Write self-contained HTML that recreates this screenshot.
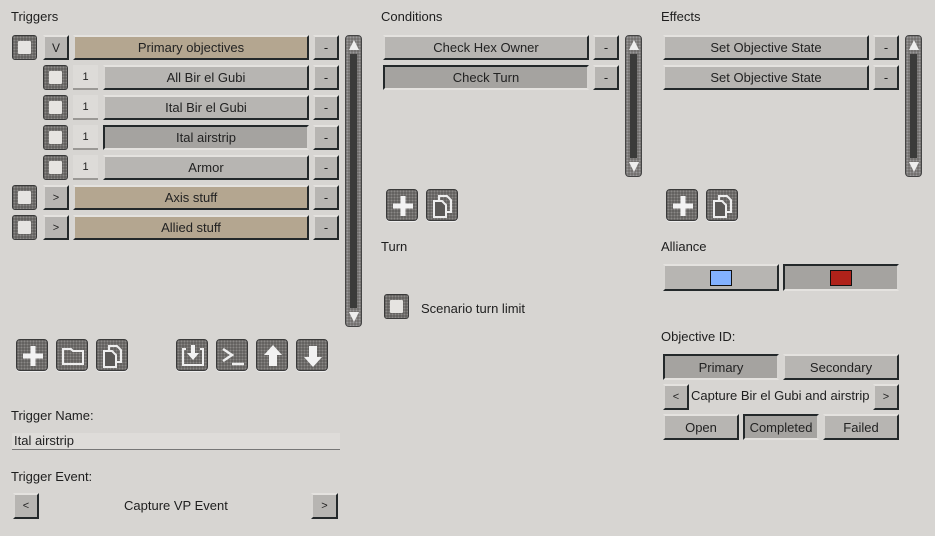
<!DOCTYPE html>
<html><head><style>
*{box-sizing:border-box;margin:0;padding:0}
body{width:935px;height:536px;overflow:hidden;background:#d7d5d2;font-family:"Liberation Sans",sans-serif;font-size:13px;color:#222;position:relative}
.a{position:absolute}
.lbl{position:absolute;font-size:13px;color:#1e1e1e}
.b{position:absolute;display:flex;align-items:center;justify-content:center;background:#b7b5b2;border-top:2px solid #e4e2df;border-left:2px solid #d8d6d3;border-bottom:2px solid #23282a;border-right:2px solid #23282a;color:#222;font-size:13px;white-space:nowrap}
.p{background:#a5a3a0;border-top:2px solid #23282a;border-left:2px solid #23282a;border-bottom:2px solid #e4e2df;border-right:2px solid #d8d6d3}
.t{background:#b4a690}
.s{font-size:11px}
.cb{position:absolute;width:25px;height:25px;border-radius:3px;background:#5a5856;background-image:radial-gradient(#8a8886 1px,transparent 1.3px);background-size:3px 3px;border:1px solid #3a3a3a}
.cb::after{content:"";position:absolute;left:5px;top:5px;width:13px;height:13px;background:#e6e4e1;border-radius:1px}
.num{position:absolute;width:25px;height:25px;background:#dddbd8;border-bottom:2px solid #9a9895;font-size:11px;display:flex;align-items:center;justify-content:center}
.sc{position:absolute;width:17px;border-radius:4px;background:#6a6866;background-image:radial-gradient(#999 1px,transparent 1.3px);background-size:3px 3px;border:1px solid #444}
.sc .tr{position:absolute;left:4px;right:4px;top:18px;bottom:18px;background:#3b3b3a}
.sc .u,.sc .d{position:absolute;left:3px;width:0;height:0;border-left:5px solid transparent;border-right:5px solid transparent}
.sc .u{top:4px;border-bottom:10px solid #eee}
.sc .d{bottom:4px;border-top:10px solid #eee}
.ic{position:absolute;width:32px;height:32px;border-radius:4px;background:#5a5856;background-image:radial-gradient(#8a8886 1px,transparent 1.3px);background-size:3px 3px;border:1px solid #3a3a3a;box-shadow:0 1px 0 #eee}
.ic svg{position:absolute;left:0;top:0}
</style></head><body>

<div class="lbl" style="left:11px;top:9px">Triggers</div>
<div class="cb" style="left:12px;top:35px"></div>
<div class="b" style="left:43px;top:35px;width:26px;height:25px;font-size:12px">V</div>
<div class="b t" style="left:73px;top:35px;width:236px;height:25px">Primary objectives</div>
<div class="b" style="left:313px;top:35px;width:26px;height:25px">-</div>

<div class="cb" style="left:43px;top:65px"></div><div class="num" style="left:73px;top:65px">1</div>
<div class="b" style="left:103px;top:65px;width:206px;height:25px">All Bir el Gubi</div>
<div class="b" style="left:313px;top:65px;width:26px;height:25px">-</div>

<div class="cb" style="left:43px;top:95px"></div><div class="num" style="left:73px;top:95px">1</div>
<div class="b" style="left:103px;top:95px;width:206px;height:25px">Ital Bir el Gubi</div>
<div class="b" style="left:313px;top:95px;width:26px;height:25px">-</div>

<div class="cb" style="left:43px;top:125px"></div><div class="num" style="left:73px;top:125px">1</div>
<div class="b p" style="left:103px;top:125px;width:206px;height:25px">Ital airstrip</div>
<div class="b" style="left:313px;top:125px;width:26px;height:25px">-</div>

<div class="cb" style="left:43px;top:155px"></div><div class="num" style="left:73px;top:155px">1</div>
<div class="b" style="left:103px;top:155px;width:206px;height:25px">Armor</div>
<div class="b" style="left:313px;top:155px;width:26px;height:25px">-</div>

<div class="cb" style="left:12px;top:185px"></div>
<div class="b s" style="left:43px;top:185px;width:26px;height:25px">&gt;</div>
<div class="b t" style="left:73px;top:185px;width:236px;height:25px">Axis stuff</div>
<div class="b" style="left:313px;top:185px;width:26px;height:25px">-</div>

<div class="cb" style="left:12px;top:215px"></div>
<div class="b s" style="left:43px;top:215px;width:26px;height:25px">&gt;</div>
<div class="b t" style="left:73px;top:215px;width:236px;height:25px">Allied stuff</div>
<div class="b" style="left:313px;top:215px;width:26px;height:25px">-</div>

<div class="sc" style="left:345px;top:35px;height:292px"><div class="tr"></div><div class="u"></div><div class="d"></div></div>

<div class="ic" style="left:16px;top:339px"><svg width="32" height="32"><path d="M16 6v20M6 16h20" stroke="#f2f2f2" stroke-width="5"/></svg></div>
<div class="ic" style="left:56px;top:339px"><svg width="32" height="32"><path d="M6 9h8l2 2h10v13H6z" fill="none" stroke="#eee" stroke-width="2"/></svg></div>
<div class="ic" style="left:96px;top:339px"><svg width="32" height="32"><path d="M12 6h8l4 4v12h-12z" fill="none" stroke="#eee" stroke-width="2"/><path d="M7 11h8l4 4v12H7z" fill="#5a5856" stroke="#eee" stroke-width="2"/></svg></div>
<div class="ic" style="left:176px;top:339px"><svg width="32" height="32"><path d="M9 9H6v16h20V9h-3" fill="none" stroke="#eee" stroke-width="2"/><path d="M14 5h4v8h4l-6 7-6-7h4z" fill="#f2f2f2"/></svg></div>
<div class="ic" style="left:216px;top:339px"><svg width="32" height="32"><path d="M6 9l9 6-9 6" fill="none" stroke="#eee" stroke-width="2.5"/><path d="M15 24h12" stroke="#eee" stroke-width="2.5"/></svg></div>
<div class="ic" style="left:256px;top:339px"><svg width="32" height="32"><path d="M16 5l9 10h-5v11h-8V15H7z" fill="#f2f2f2"/></svg></div>
<div class="ic" style="left:296px;top:339px"><svg width="32" height="32"><path d="M16 27l9-10h-5V6h-8v11H7z" fill="#f2f2f2"/></svg></div>

<div class="lbl" style="left:11px;top:408px">Trigger Name:</div>
<div class="a" style="left:12px;top:433px;width:328px;height:17px;background:#dedcd9;border-bottom:1px solid #777;font-size:13px;padding-left:2px;line-height:16px">Ital airstrip</div>
<div class="lbl" style="left:11px;top:469px">Trigger Event:</div>
<div class="b s" style="left:13px;top:493px;width:26px;height:26px">&lt;</div>
<div class="lbl" style="left:124px;top:498px">Capture VP Event</div>
<div class="b s" style="left:311px;top:493px;width:27px;height:26px">&gt;</div>

<div class="lbl" style="left:381px;top:9px">Conditions</div>
<div class="b" style="left:383px;top:35px;width:206px;height:25px">Check Hex Owner</div>
<div class="b" style="left:593px;top:35px;width:26px;height:25px">-</div>
<div class="b p" style="left:383px;top:65px;width:206px;height:25px">Check Turn</div>
<div class="b" style="left:593px;top:65px;width:26px;height:25px">-</div>
<div class="sc" style="left:625px;top:35px;height:142px"><div class="tr"></div><div class="u"></div><div class="d"></div></div>
<div class="ic" style="left:386px;top:189px"><svg width="32" height="32"><path d="M16 6v20M6 16h20" stroke="#f2f2f2" stroke-width="5"/></svg></div>
<div class="ic" style="left:426px;top:189px"><svg width="32" height="32"><path d="M12 6h8l4 4v12h-12z" fill="none" stroke="#eee" stroke-width="2"/><path d="M7 11h8l4 4v12H7z" fill="#5a5856" stroke="#eee" stroke-width="2"/></svg></div>
<div class="lbl" style="left:381px;top:239px">Turn</div>
<div class="cb" style="left:384px;top:294px"></div>
<div class="lbl" style="left:421px;top:301px">Scenario turn limit</div>

<div class="lbl" style="left:661px;top:9px">Effects</div>
<div class="b" style="left:663px;top:35px;width:206px;height:25px">Set Objective State</div>
<div class="b" style="left:873px;top:35px;width:26px;height:25px">-</div>
<div class="b" style="left:663px;top:65px;width:206px;height:25px">Set Objective State</div>
<div class="b" style="left:873px;top:65px;width:26px;height:25px">-</div>
<div class="sc" style="left:905px;top:35px;height:142px"><div class="tr"></div><div class="u"></div><div class="d"></div></div>
<div class="ic" style="left:666px;top:189px"><svg width="32" height="32"><path d="M16 6v20M6 16h20" stroke="#f2f2f2" stroke-width="5"/></svg></div>
<div class="ic" style="left:706px;top:189px"><svg width="32" height="32"><path d="M12 6h8l4 4v12h-12z" fill="none" stroke="#eee" stroke-width="2"/><path d="M7 11h8l4 4v12H7z" fill="#5a5856" stroke="#eee" stroke-width="2"/></svg></div>

<div class="lbl" style="left:661px;top:239px">Alliance</div>
<div class="b" style="left:663px;top:264px;width:116px;height:27px"><div style="width:22px;height:16px;background:#82b1ff;border:1px solid #111"></div></div>
<div class="b p" style="left:783px;top:264px;width:116px;height:27px"><div style="width:22px;height:16px;background:#b0221a;border:1px solid #111"></div></div>

<div class="lbl" style="left:661px;top:329px">Objective ID:</div>
<div class="b p" style="left:663px;top:354px;width:116px;height:26px">Primary</div>
<div class="b" style="left:783px;top:354px;width:116px;height:26px">Secondary</div>
<div class="b s" style="left:663px;top:384px;width:26px;height:26px">&lt;</div>
<div class="lbl" style="left:691px;top:388px;white-space:nowrap">Capture Bir el Gubi and airstrip</div>
<div class="b s" style="left:873px;top:384px;width:26px;height:26px">&gt;</div>
<div class="b" style="left:663px;top:414px;width:76px;height:26px">Open</div>
<div class="b p" style="left:743px;top:414px;width:76px;height:26px">Completed</div>
<div class="b" style="left:823px;top:414px;width:76px;height:26px">Failed</div>
</body></html>
